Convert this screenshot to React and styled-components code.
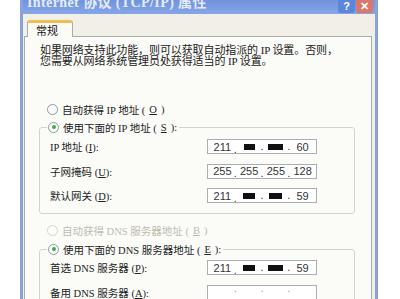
import styled, { createGlobalStyle } from "styled-components";

const GlobalStyle = createGlobalStyle`
  html, body {
    margin: 0;
    padding: 0;
    background: #ffffff;
    overflow: hidden;
  }
`;

const Page = styled.div`
  display: flex;
  width: 400px;
  height: 299px;
  overflow: hidden;
  padding-left: 20px;
  box-sizing: border-box;
  background: #ffffff;
  font-family: "Liberation Serif", "Noto Sans CJK SC", serif;
  font-size: 10.5px;
  color: #222;
`;

const Window = styled.div`
  display: flex;
  flex-direction: column;
  width: 352px;
  height: 100%;
  overflow: hidden;
  border-left: 3px solid #8aa2dc;
  border-right: 3px solid #8aa2dc;
  background: #f1efe6;
`;

const TitleBar = styled.div`
  display: flex;
  align-items: flex-start;
  flex-shrink: 0;
  height: 14px;
  padding-left: 4px;
  padding-right: 2px;
  background: linear-gradient(#6f93de, #86a6e6);
  overflow: hidden;
`;

const Title = styled.div`
  flex: 1;
  margin-top: -5px;
  font-family: "Liberation Serif", "Noto Sans CJK SC", serif;
  font-weight: bold;
  font-size: 14px;
  line-height: 16px;
  color: #e4ebfa;
  letter-spacing: 0.4px;
  white-space: nowrap;
`;

const CaptionButton = styled.div`
  display: flex;
  align-items: center;
  justify-content: center;
  width: 17px;
  height: 13px;
  margin-left: 1px;
  border-radius: 0 0 3px 3px;
  background: ${(p) => (p.$close ? "#d9776a" : "#5a86dc")};
  color: #ffffff;
  font-family: "Liberation Sans", sans-serif;
  font-weight: bold;
  font-size: 11px;
  line-height: 13px;
`;

const Body = styled.div`
  display: flex;
  flex-direction: column;
  flex: 1;
  padding: 6px 3px 0 1px;
`;

const Tab = styled.div`
  width: 46px;
  height: 17px;
  margin-left: 3px;
  margin-bottom: -1px;
  padding-left: 8px;
  box-sizing: border-box;
  border: 1px solid #a6aeb0;
  border-bottom: none;
  border-top: 3px solid #f0bd52;
  border-radius: 3px 3px 0 0;
  background: #fbfbf8;
  font-family: "Noto Sans CJK SC", sans-serif;
  font-size: 11px;
  line-height: 14px;
  color: #111;
  position: relative;
  z-index: 1;
`;

const Panel = styled.div`
  display: flex;
  flex-direction: column;
  flex: 1;
  padding: 8px 10px 0 15px;
  border: 1px solid #a6aeb0;
  border-bottom: none;
  background: #fbfbf8;
`;

const Intro = styled.p`
  margin: 0 0 35px;
  font-size: 11px;
  line-height: 11px;
  letter-spacing: -0.1px;
  white-space: nowrap;
`;

const RadioRow = styled.label`
  display: flex;
  align-items: center;
  gap: 4px;
  height: 14px;
  padding: 0 2px 0 1px;
  margin-left: ${(p) => (p.$inLegend ? 0 : 6)}px;
  margin-top: ${(p) => p.$top || 0}px;
  color: ${(p) => (p.$disabled ? "#bebbb0" : "#222")};
  white-space: nowrap;
`;

const Radio = styled.span`
  position: relative;
  flex-shrink: 0;
  width: 9px;
  height: 9px;
  border-radius: 50%;
  border: 1px solid ${(p) => (p.$disabled ? "#d6d4ca" : "#8c9aa8")};
  background: #fdfdfb;
  &::after {
    content: "";
    display: ${(p) => (p.$checked ? "block" : "none")};
    position: absolute;
    left: 2.5px;
    top: 2.5px;
    width: 4px;
    height: 4px;
    border-radius: 50%;
    background: #3fae3f;
  }
`;

const Group = styled.fieldset`
  margin: ${(p) => p.$top || 0}px 0 0 -1px;
  width: 316px;
  box-sizing: border-box;
  padding: ${(p) => p.$padTop}px 0 10px 10px;
  border: 1px solid #d5d3c8;
  border-radius: 3px;
  display: grid;
  grid-template-columns: 157px 110px;
  row-gap: 9.5px;
  align-items: center;
  & > legend {
    padding: 0;
    margin-left: -3px;
  }
`;

const FieldLabel = styled.div`
  white-space: nowrap;
`;

const IpBox = styled.div`
  display: flex;
  align-items: center;
  height: 15px;
  box-sizing: border-box;
  padding-left: 1px;
  border: 1px solid #a9aeb3;
  background: #ffffff;
  font-family: "Liberation Sans", sans-serif;
  font-size: 11px;
  color: #333;
`;

const Octet = styled.span`
  position: relative;
  width: 27px;
  display: flex;
  align-items: center;
  justify-content: center;
  &:not(:last-child)::after {
    content: ".";
    position: absolute;
    right: -1px;
    bottom: -2px;
    color: ${(p) => (p.$empty ? "#999" : "#333")};
  }
`;

const Mask = styled.span`
  display: inline-block;
  width: ${(p) => p.$w}px;
  height: 6px;
  background: #111;
`;

const IpField = ({ parts }) => (
  <IpBox>
    {parts.map((p, i) => (
      <Octet key={i} $empty={!parts.some(Boolean)}>
        {typeof p === "number" ? <Mask $w={p} /> : p}
      </Octet>
    ))}
  </IpBox>
);

const Acc = ({ k }) => (
  <>
    (<u>{k}</u>)
  </>
);

export default function App() {
  return (
    <>
      <GlobalStyle />
      <Page>
        <Window>
          <TitleBar>
            <Title>Internet 协议 (TCP/IP) 属性</Title>
            <CaptionButton>?</CaptionButton>
            <CaptionButton $close>✕</CaptionButton>
          </TitleBar>
          <Body>
            <Tab>常规</Tab>
            <Panel>
              <Intro>
                如果网络支持此功能，则可以获取自动指派的 IP 设置。否则，
                <br />
                您需要从网络系统管理员处获得适当的 IP 设置。
              </Intro>
              <RadioRow>
                <Radio />
                自动获得 IP 地址 <Acc k="O" />
              </RadioRow>
              <Group $top={4} $padTop={5}>
                <legend>
                  <RadioRow as="span" $inLegend>
                    <Radio $checked />
                    使用下面的 IP 地址 <Acc k="S" />:
                  </RadioRow>
                </legend>
                <FieldLabel>
                  IP 地址 <Acc k="I" />:
                </FieldLabel>
                <IpField parts={["211", 11, 15, "60"]} />
                <FieldLabel>
                  子网掩码 <Acc k="U" />:
                </FieldLabel>
                <IpField parts={["255", "255", "255", "128"]} />
                <FieldLabel>
                  默认网关 <Acc k="D" />:
                </FieldLabel>
                <IpField parts={["211", 12, 13, "59"]} />
              </Group>
              <RadioRow $top={9} $disabled>
                <Radio $disabled />
                自动获得 DNS 服务器地址 <Acc k="B" />
              </RadioRow>
              <Group $top={5} $padTop={4}>
                <legend>
                  <RadioRow as="span" $inLegend>
                    <Radio $checked />
                    使用下面的 DNS 服务器地址 <Acc k="E" />:
                  </RadioRow>
                </legend>
                <FieldLabel>
                  首选 DNS 服务器 <Acc k="P" />:
                </FieldLabel>
                <IpField parts={["211", 12, 15, "59"]} />
                <FieldLabel>
                  备用 DNS 服务器 <Acc k="A" />:
                </FieldLabel>
                <IpField parts={["", "", "", ""]} />
              </Group>
            </Panel>
          </Body>
        </Window>
      </Page>
    </>
  );
}
